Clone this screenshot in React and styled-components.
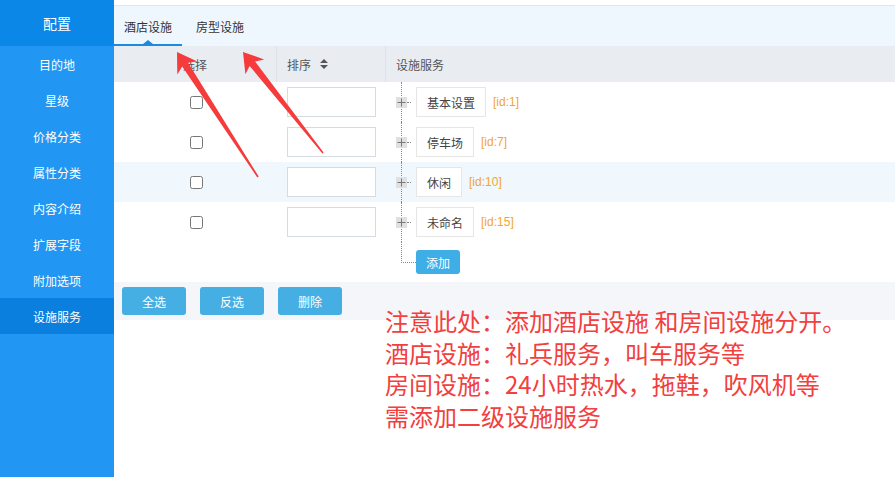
import React from "react";
import styled, { createGlobalStyle } from "styled-components";

const Global = createGlobalStyle`
  html, body { margin: 0; padding: 0; background: #fff; }
  body { font-family: "Noto Sans CJK SC", "Noto Sans", sans-serif; }
  * { box-sizing: border-box; }
`;

const Page = styled.div`
  position: relative;
  display: flex;
  width: 895px;
  height: 477px;
  overflow: hidden;
`;

const Sidebar = styled.nav`
  width: 114px;
  flex: none;
  background: #2196f2;
  display: flex;
  flex-direction: column;
`;

const SideHead = styled.div`
  height: 46px;
  background: #0b87e7;
  color: #fff;
  font-size: 14px;
  display: flex;
  align-items: center;
  justify-content: center;
`;

const SideItem = styled.div`
  height: 36px;
  display: flex;
  align-items: center;
  justify-content: center;
  color: #fff;
  font-size: 12px;
  background: ${(p) => (p.$active ? "#0a7fde" : "transparent")};
`;

const Main = styled.main`
  flex: 1;
  display: flex;
  flex-direction: column;
  min-width: 0;
`;

const TopStrip = styled.div`
  height: 6px;
  background: #fff;
  border-bottom: 1px solid #dfe6ef;
`;

const TabBar = styled.div`
  height: 40px;
  background: #eff7fe;
  display: flex;
  gap: 4px;
`;

const Tab = styled.div`
  position: relative;
  padding: 0 10px;
  display: flex;
  align-items: center;
  font-size: 12px;
  color: #333;
  border-bottom: 2px solid ${(p) => (p.$active ? "#1b8be2" : "transparent")};
  padding-top: 2px;
  &::after {
    content: "";
    display: ${(p) => (p.$active ? "block" : "none")};
    position: absolute;
    left: 50%;
    bottom: 0;
    margin-left: -5px;
    border: 5px solid transparent;
    border-bottom: 4px solid #1b8be2;
    border-top-width: 0;
  }
`;

const Row = styled.div`
  display: grid;
  grid-template-columns: 163px 109px 1fr;
  height: ${(p) => (p.$head ? "36px" : "40px")};
  background: ${(p) => (p.$head ? "#e9edf2" : p.$hover ? "#f0f7fd" : "#fff")};
`;

const HeadCell = styled.div`
  display: flex;
  align-items: center;
  justify-content: ${(p) => (p.$center ? "center" : "flex-start")};
  padding-left: ${(p) => (p.$center ? "0" : "10px")};
  font-size: 12px;
  color: #555;
  border-right: ${(p) => (p.$last ? "none" : "1px solid #dde2e9")};
  gap: 9px;
`;

const Cell = styled.div`
  display: flex;
  align-items: center;
  justify-content: ${(p) => (p.$center ? "center" : "flex-start")};
  padding-left: ${(p) => (p.$center ? "0" : "10px")};
`;

const Check = styled.input`
  width: 13px;
  height: 13px;
  margin: 0 0 0 1px;
`;

const SortInput = styled.input`
  width: 89px;
  height: 30px;
  border: 1px solid #d4dbe3;
  background: #fff;
  outline: none;
  padding: 0 6px;
`;

const TreeCell = styled.div`
  position: relative;
  display: flex;
  align-items: center;
  padding-left: 10px;
  &::before {
    content: "";
    position: absolute;
    left: 15px;
    top: 0;
    bottom: 0;
    border-left: 1px dotted #888;
  }
`;

const PlusBox = styled.span`
  position: relative;
  z-index: 1;
  width: 11px;
  height: 11px;
  background: #e0e0e0;
  display: flex;
  align-items: center;
  justify-content: center;
`;

const Dash = styled.span`
  width: 4px;
  border-top: 1px dotted #888;
  margin-right: 5px;
`;

const NameBox = styled.span`
  height: 30px;
  padding: 0 10px;
  border: 1px solid #e6e6e6;
  background: #fff;
  font-size: 12px;
  color: #444;
  display: flex;
  align-items: center;
`;

const IdTag = styled.span`
  margin-left: 7px;
  font-family: "Liberation Sans", sans-serif;
  font-size: 12px;
  color: #f4a431;
`;

const AddCell = styled.div`
  display: flex;
  align-items: center;
  padding-left: 15px;
`;

const Elbow = styled.span`
  align-self: flex-start;
  width: 15px;
  height: 21px;
  border-left: 1px dotted #888;
  border-bottom: 1px dotted #888;
`;

const SmallBtn = styled.button`
  height: 24px;
  width: 44px;
  border: none;
  border-radius: 3px;
  background: #40aee6;
  color: #fff;
  font-family: inherit;
  font-size: 12px;
  padding: 0;
`;

const Footer = styled.div`
  height: 38px;
  background: #f4f6fa;
  display: flex;
  align-items: center;
  gap: 14px;
  padding-left: 8px;
`;

const Btn = styled.button`
  width: 64px;
  height: 28px;
  border: none;
  border-radius: 3px;
  background: #45aee3;
  color: #fff;
  font-family: inherit;
  font-size: 12px;
  padding: 0;
`;

const Note = styled.div`
  position: absolute;
  left: 385px;
  top: 305px;
  color: #f2403e;
  font-size: 24px;
  line-height: 31.5px;
  white-space: pre;
  pointer-events: none;
`;

const Overlay = styled.svg`
  position: absolute;
  left: 0;
  top: 0;
  pointer-events: none;
`;

const SortIcon = () => (
  <svg width="8" height="10" viewBox="0 0 8 10">
    <path d="M4 0 L8 4 L0 4 Z M0 6 L8 6 L4 10 Z" fill="#555" />
  </svg>
);

const PlusIcon = () => (
  <svg width="9" height="9" viewBox="0 0 9 9">
    <path d="M0.5 4.5 H8.5 M4.5 0.5 V8.5" stroke="#777" strokeWidth="1" />
  </svg>
);

const menu = ["目的地", "星级", "价格分类", "属性分类", "内容介绍", "扩展字段", "附加选项", "设施服务"];
const rows = [
  { name: "基本设置", id: 1 },
  { name: "停车场", id: 7 },
  { name: "休闲", id: 10, hover: true },
  { name: "未命名", id: 15 },
];

function arrow(tip, tail, headLen = 19, headHalf = 12, innerLen = 15, innerHalf = 3.5, tailHalf = 0.8) {
  const dx = tail[0] - tip[0];
  const dy = tail[1] - tip[1];
  const len = Math.hypot(dx, dy);
  const u = [dx / len, dy / len];
  const p = [u[1], -u[0]];
  const pt = (a, b) => [tip[0] + u[0] * a + p[0] * b, tip[1] + u[1] * a + p[1] * b];
  const pts = [
    pt(0, 0),
    pt(headLen, headHalf),
    pt(innerLen, innerHalf),
    pt(len, tailHalf),
    pt(len, -tailHalf),
    pt(innerLen, -innerHalf),
    pt(headLen, -headHalf),
  ];
  return pts.map((q) => q[0].toFixed(1) + "," + q[1].toFixed(1)).join(" ");
}

export default function App() {
  return (
    <Page>
      <Global />
      <Sidebar>
        <SideHead>配置</SideHead>
        {menu.map((m) => (
          <SideItem key={m} $active={m === "设施服务"}>{m}</SideItem>
        ))}
      </Sidebar>
      <Main>
        <TopStrip />
        <TabBar>
          <Tab $active>酒店设施</Tab>
          <Tab>房型设施</Tab>
        </TabBar>
        <Row $head>
          <HeadCell $center>选择</HeadCell>
          <HeadCell>排序 <SortIcon /></HeadCell>
          <HeadCell $last>设施服务</HeadCell>
        </Row>
        {rows.map((r) => (
          <Row key={r.id} $hover={r.hover}>
            <Cell $center><Check type="checkbox" /></Cell>
            <Cell><SortInput type="text" /></Cell>
            <TreeCell>
              <PlusBox><PlusIcon /></PlusBox>
              <Dash />
              <NameBox>{r.name}</NameBox>
              <IdTag>[id:{r.id}]</IdTag>
            </TreeCell>
          </Row>
        ))}
        <Row>
          <Cell />
          <Cell />
          <AddCell>
            <Elbow />
            <SmallBtn>添加</SmallBtn>
          </AddCell>
        </Row>
        <Footer>
          <Btn>全选</Btn>
          <Btn>反选</Btn>
          <Btn>删除</Btn>
        </Footer>
      </Main>
      <Note>{"注意此处：添加酒店设施 和房间设施分开。\n酒店设施：礼兵服务，叫车服务等\n房间设施：24小时热水，拖鞋，吹风机等\n需添加二级设施服务"}</Note>
      <Overlay width="895" height="477" viewBox="0 0 895 477">
        <polygon points={arrow([177, 52], [258, 177])} fill="#f53b3b" />
        <polygon points={arrow([243, 52], [323, 153])} fill="#f53b3b" />
      </Overlay>
    </Page>
  );
}
